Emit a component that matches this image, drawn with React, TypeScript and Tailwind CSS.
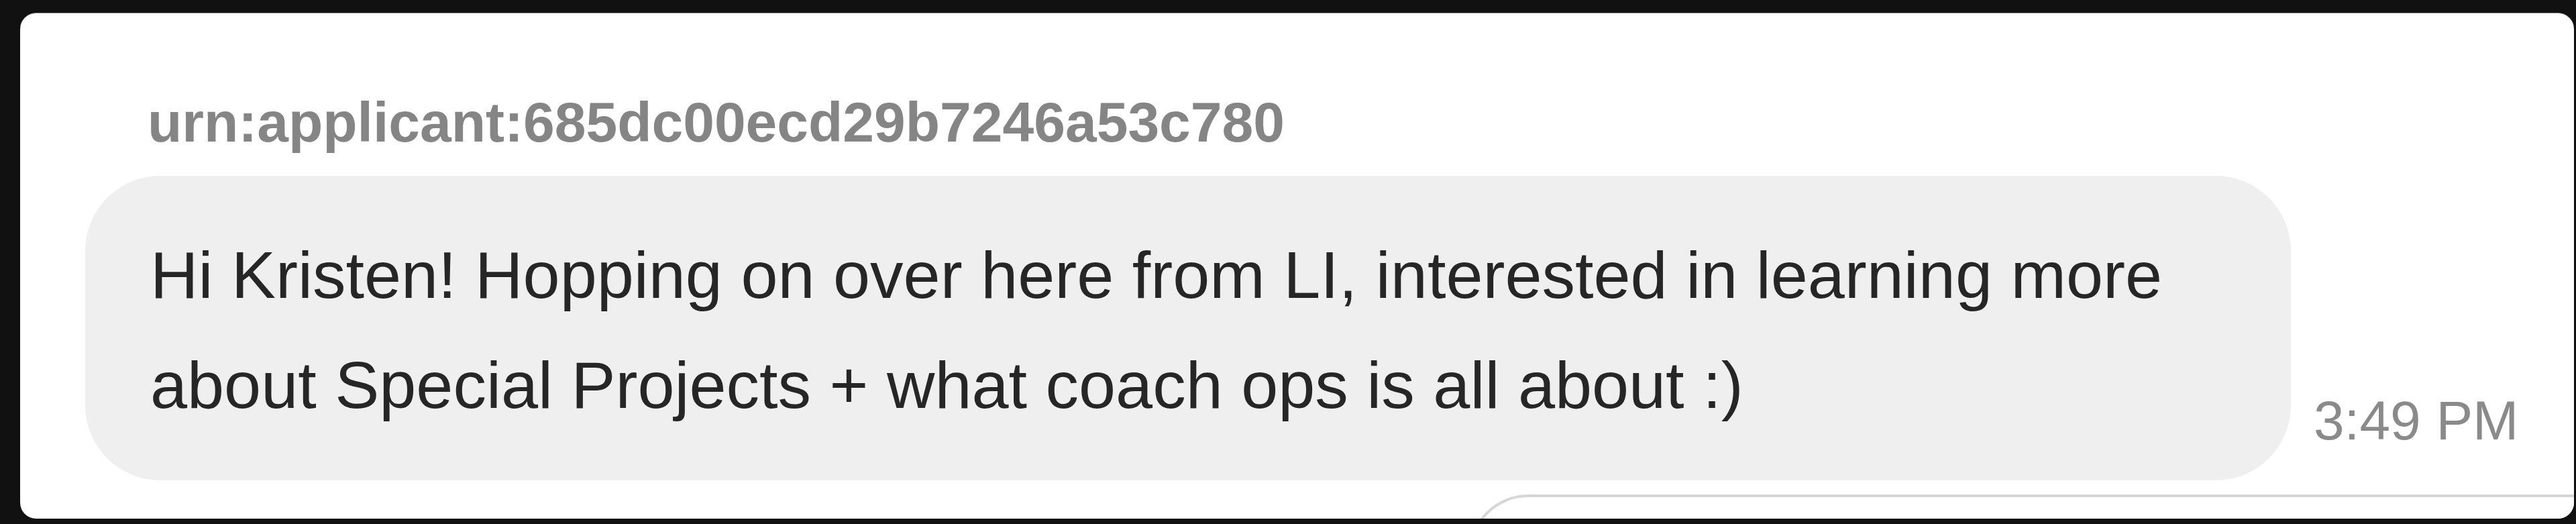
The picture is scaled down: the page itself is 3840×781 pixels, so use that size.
import React from 'react';

const App: React.FC = () => {
  return (
    <div className="h-[781px] bg-[#111111] pl-[30px] pr-[3px] pt-[19px] font-['Liberation_Sans',Arial,sans-serif]">
      {/* Conversation panel */}
      <div className="h-[754px] bg-white rounded-[24px] overflow-hidden border-t border-[#9a9a9a] pt-[114px] pl-[97px]">
        <div className="pl-[93px] text-[84px] leading-[96px] font-bold text-[#858585] whitespace-nowrap">
          urn:applicant:685dc00ecd29b7246a53c780
        </div>

        <div className="mt-[32px] flex items-end gap-[34px]">
          <div className="w-[3288px] shrink-0 rounded-[112px] bg-[#efefef] pl-[97px] pr-[98px] pt-[66px] pb-[60px] text-[99px] leading-[164px] text-[#262626]">
            Hi Kristen! Hopping on over here from LI, interested in learning more about Special Projects + what coach ops is all about :)
          </div>
          <div className="mb-[42px] text-[82px] leading-[94px] text-[#8a8a8a] whitespace-nowrap">3:49 PM</div>
        </div>

        {/* Next message, cut off by the panel edge */}
        <div className="mt-[21px] ml-[2063px] w-[1800px] h-[200px] rounded-tl-[88px] border-t-4 border-l-4 border-[#d6d6d6] bg-white"></div>
      </div>
    </div>
  );
};

export default App;
